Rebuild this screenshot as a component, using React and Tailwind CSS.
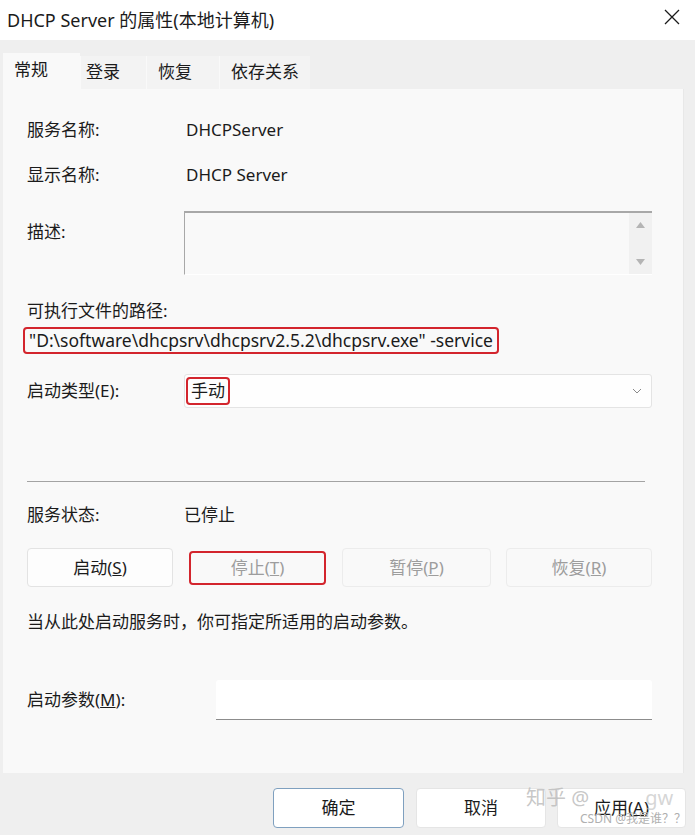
import React from "react";

const F = "font-['Noto_Sans','Noto_Sans_CJK_SC',sans-serif]";

function Btn({ children, disabled, className = "" }) {
  return (
    <div
      className={
        "flex items-center justify-center rounded-[4px] border text-[17px] " +
        (disabled
          ? "bg-[#f9f9f9] border-[#ececec] text-[#9d9d9d] "
          : "bg-[#fdfdfd] border-[#e3e3e3] text-[#1b1b1b] ") +
        className
      }
    >
      {children}
    </div>
  );
}

export default function App() {
  return (
    <div className={"relative w-[695px] h-[835px] overflow-hidden bg-[#efefef] text-[#1b1b1b] " + F}>
      {/* Title bar */}
      <div className="h-[40px] bg-white flex items-center justify-between pl-[7px] pr-[15px]">
        <div className="text-[18px] leading-none">DHCP Server 的属性(本地计算机)</div>
        <svg width="16" height="16" viewBox="0 0 16 16" className="mb-[6px]">
          <path d="M1 1 L15 15 M15 1 L1 15" stroke="#1b1b1b" strokeWidth="1.3" fill="none" />
        </svg>
      </div>

      {/* Tabs */}
      <div className="h-[49px] pl-[3px] flex items-end">
        <div className="w-[77px] h-[36px] bg-[#f9f9f9] pl-[11px] pt-[2px] text-[17px] leading-[30px]">常规</div>
        <div className="w-[66px] h-[33px] bg-[#f3f3f3] border-l border-[#f9f9f9] pl-[5px] text-[17px] leading-[32px]">登录</div>
        <div className="w-[73px] h-[33px] bg-[#f3f3f3] border-l border-[#f9f9f9] pl-[11px] text-[17px] leading-[32px]">恢复</div>
        <div className="w-[91px] h-[33px] bg-[#f3f3f3] border-l border-[#f9f9f9] pl-[11px] text-[17px] leading-[32px]">依存关系</div>
      </div>

      {/* Panel */}
      <div className="ml-[3px] w-[681px] h-[684px] bg-[#f9f9f9] border-r border-[#e8e8e8] pl-[24px] pr-[31px] text-[17px] flex flex-col">
        <div className="mt-[29px] h-[24px] flex items-center">
          <div className="w-[159px]">服务名称:</div>
          <div>DHCPServer</div>
        </div>
        <div className="mt-[21px] h-[24px] flex items-center">
          <div className="w-[159px]">显示名称:</div>
          <div>DHCP Server</div>
        </div>
        <div className="mt-[24px] h-[64px] flex">
          <div className="w-[157px] pt-[9px] leading-[24px]">描述:</div>
          <div className="flex-1 flex border-t-2 border-l border-[#a8a8a8] border-b border-b-white bg-[#f9f9f9]">
            <div className="flex-1" />
            <div className="w-[23px] bg-[#f1f1f1] flex flex-col items-center justify-between py-[9px]">
              <svg width="9" height="6" viewBox="0 0 9 6"><path d="M0 6 L4.5 0 L9 6Z" fill="#b4b4b4" /></svg>
              <svg width="9" height="6" viewBox="0 0 9 6"><path d="M0 0 L4.5 6 L9 0Z" fill="#b4b4b4" /></svg>
            </div>
          </div>
        </div>
        <div className="mt-[24px] h-[24px] flex items-center">可执行文件的路径:</div>
        <div className="mt-[4px] h-[27px] flex">
          <div className="-ml-[4px] px-[4px] h-[27px] flex items-center border-2 border-[#d3252d] rounded-[4px] leading-none text-[17.5px]">
            "D:\software\dhcpsrv\dhcpsrv2.5.2\dhcpsrv.exe" -service
          </div>
        </div>
        <div className="mt-[20px] h-[34px] flex items-center">
          <div className="w-[157px]">启动类型(E):</div>
          <div className="flex-1 h-[34px] bg-[#fefefe] border border-[#e4e4e4] rounded-[3px] flex items-center justify-between pl-[1px] pr-[9px]">
            <div className="h-[28px] px-[3px] flex items-center border-2 border-[#d3252d] rounded-[4px]">手动</div>
            <svg width="10" height="6" viewBox="0 0 10 6"><path d="M1 1 L5 5 L9 1" stroke="#8a8a8a" strokeWidth="1" fill="none" /></svg>
          </div>
        </div>
        <div className="mt-[73px] h-px bg-[#a3a3a3] mr-[7px]" />
        <div className="mt-[21px] h-[24px] flex items-center">
          <div className="w-[157px]">服务状态:</div>
          <div>已停止</div>
        </div>
        <div className="mt-[21px] h-[39px] flex items-center">
          <Btn className="w-[146px] h-[39px]">启动(<span className="underline">S</span>)</Btn>
          <div className="ml-[16px] w-[137px] h-[34px] border-2 border-[#d3252d] rounded-[4px] flex">
            <Btn disabled className="flex-1 border-0">停止(<span className="underline">T</span>)</Btn>
          </div>
          <Btn disabled className="ml-[16px] w-[149px] h-[39px]">暂停(<span className="underline">P</span>)</Btn>
          <Btn disabled className="ml-[15px] w-[146px] h-[39px]">恢复(<span className="underline">R</span>)</Btn>
        </div>
        <div className="mt-[23px] h-[24px] flex items-center">当从此处启动服务时，你可指定所适用的启动参数。</div>
        <div className="mt-[46px] h-[40px] flex items-center">
          <div className="w-[189px]">启动参数(<span className="underline">M</span>):</div>
          <div className="flex-1 h-[40px] bg-white border-b border-[#8c8c8c] rounded-t-[3px]" />
        </div>
      </div>

      {/* Bottom buttons */}
      <div className="mt-[15px] flex pl-[273px]">
        <div className="w-[131px] h-[40px] bg-white border border-[#7fa0bf] rounded-[4px] flex items-center justify-center text-[17px]">确定</div>
        <div className="ml-[12px] w-[130px] h-[40px] bg-white border border-[#e5e5e5] rounded-[4px] flex items-center justify-center text-[17px]">取消</div>
        <div className="ml-[11px] w-[129px] h-[40px] bg-white border border-[#e5e5e5] rounded-[4px] flex items-center justify-center text-[17px]">应用(<span className="underline">A</span>)</div>
      </div>

      {/* Watermark */}
      <div className="absolute left-[526px] top-[788px] text-[20px] leading-none text-[#b9b9b9]/80 pointer-events-none">
        知乎 @<span className="ml-[56px] text-[#c4c4c4]/70">gw</span>
      </div>
      <div className="absolute left-[580px] top-[813px] text-[12px] leading-none text-[#b0b0b0] pointer-events-none">
        CSDN @我是谁？？
      </div>
    </div>
  );
}
